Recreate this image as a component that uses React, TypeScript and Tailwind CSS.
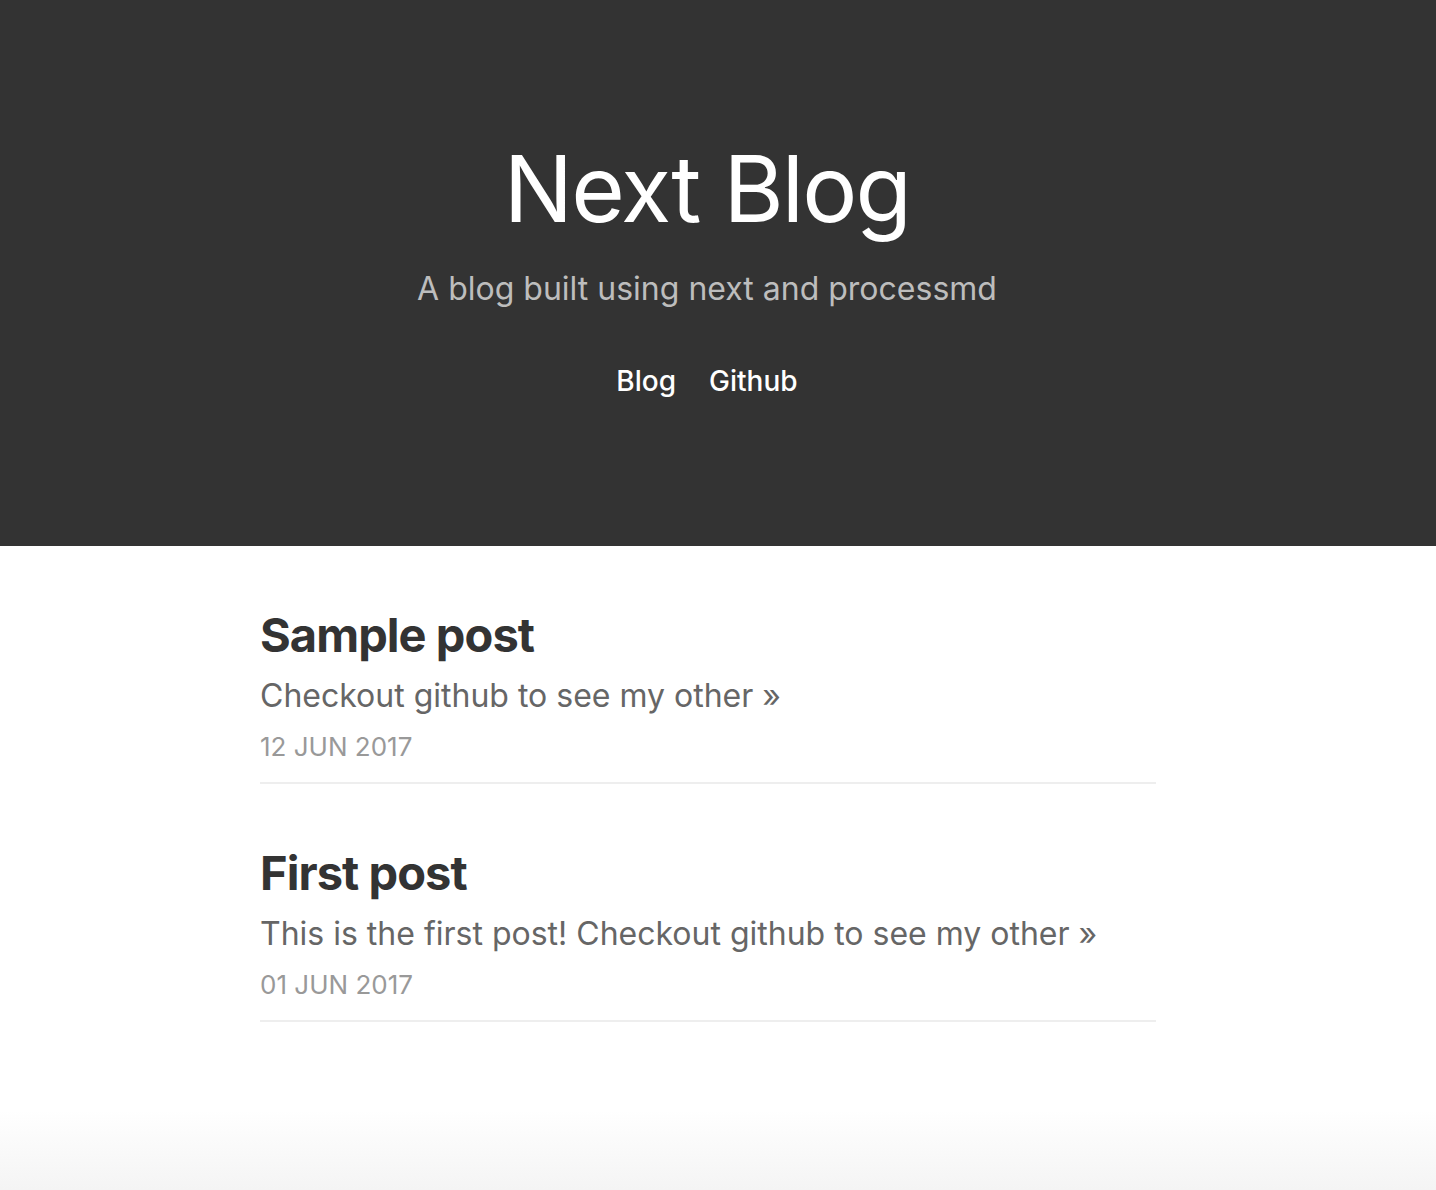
import React from "react";

type Post = {
  title: string;
  excerpt: string;
  date: string;
};

const posts: Post[] = [
  {
    title: "Sample post",
    excerpt: "Checkout github to see my other »",
    date: "12 JUN 2017",
  },
  {
    title: "First post",
    excerpt: "This is the first post! Checkout github to see my other »",
    date: "01 JUN 2017",
  },
];

const font = { fontFamily: "Inter, 'Noto Sans', sans-serif" };

const App: React.FC = () => {
  return (
    <div style={font} className="min-h-[1190px] flex flex-col bg-white">
      <header className="bg-[#333333] h-[546px] pr-[22px] pt-[143px] flex flex-col items-center">
        <h1 className="text-[92px] leading-none font-normal text-white tracking-[-0.02em]">
          Next Blog
        </h1>
        <p className="mt-[38px] text-[32px] leading-none text-[#bdbdbd]">
          A blog built using next and processmd
        </p>
        <nav className="mt-[62px] flex gap-[33px] text-[28px] leading-none font-medium text-white">
          <a href="#">Blog</a>
          <a href="#">Github</a>
        </nav>
      </header>

      <main className="flex-1 pr-[20px] pt-[61px]">
        <div className="mx-auto w-[896px] flex flex-col gap-[61px]">
          {posts.map((post) => (
            <article key={post.title} className="border-b-2 border-[#eeeeee] pb-[20px]">
              <h2 className="text-[47px] leading-[1.2] font-bold text-[#333333] tracking-[-0.02em]">
                {post.title}
              </h2>
              <p className="mt-[14px] text-[32px] leading-[1.2] text-[#666666]">
                {post.excerpt}
              </p>
              <p className="mt-[15px] text-[26px] leading-[1.2] text-[#999999]">
                {post.date}
              </p>
            </article>
          ))}
        </div>
      </main>

      <footer className="h-[80px] bg-gradient-to-b from-white to-[#f4f4f4]" />
    </div>
  );
};

export default App;
